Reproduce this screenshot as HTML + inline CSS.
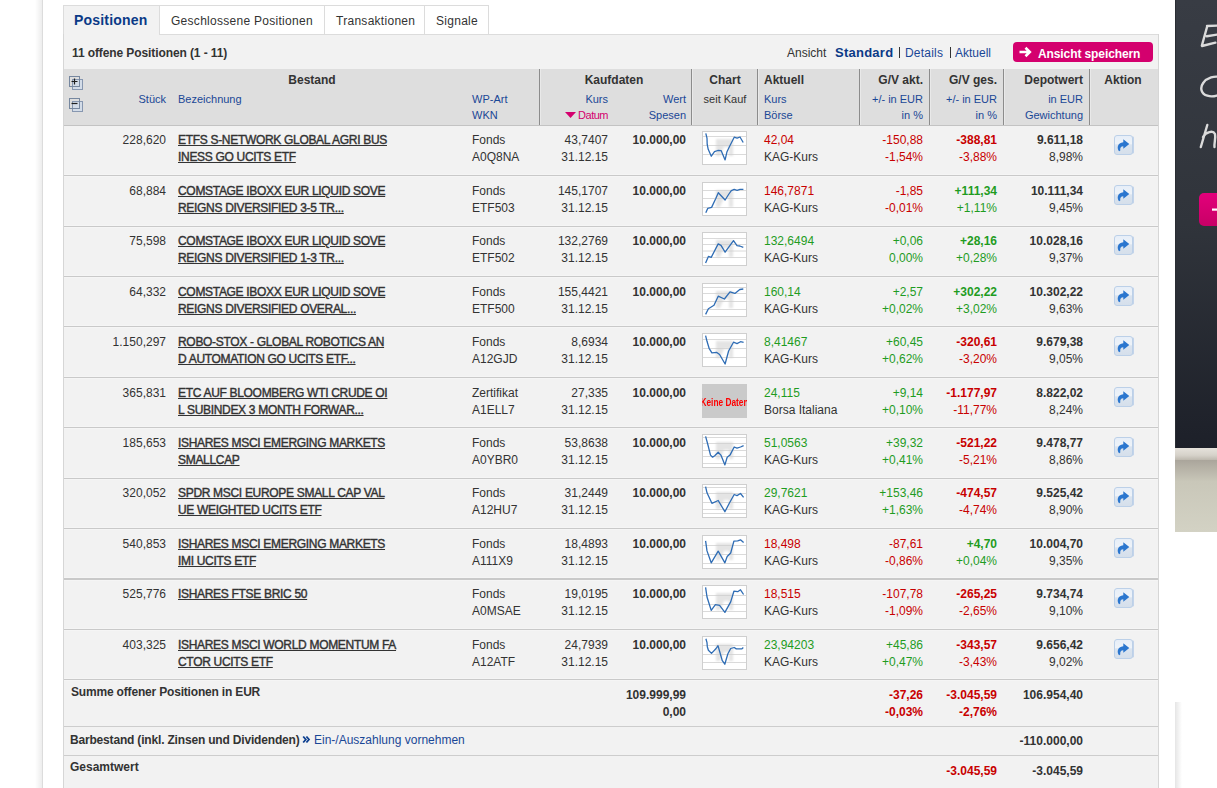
<!DOCTYPE html>
<html><head><meta charset="utf-8"><title>Depot</title>
<style>
html,body{margin:0;padding:0;background:#fff;width:1217px;height:788px;overflow:hidden;position:relative}
.t{position:absolute;white-space:nowrap;font-family:"Liberation Sans", sans-serif;line-height:14px}
.r{position:absolute;display:block}
</style></head><body>
<div class="r" style="left:35px;top:0px;width:7px;height:788px;background:linear-gradient(to right, rgba(255,255,255,0), rgba(0,0,0,0.07));"></div>
<div class="r" style="left:42px;top:0px;width:1px;height:788px;background:#dcdcdc;"></div>
<div class="r" style="left:1175px;top:702px;width:7px;height:86px;background:linear-gradient(to right, rgba(0,0,0,0.10), rgba(255,255,255,0));"></div>
<div class="r" style="left:1175px;top:0;width:42px;height:448px;background:linear-gradient(to bottom,#383c44 0%,#30343b 50%,#1d2029 100%)"></div>
<div class="r" style="left:1175px;top:0px;width:1px;height:448px;background:#2a2d33;"></div>
<div class="r" style="left:1175px;top:448px;width:42px;height:12px;background:linear-gradient(to bottom,#e6e2dc,#d6d2ca 60%,#bdb8ae)"></div>
<div class="r" style="left:1175px;top:460px;width:42px;height:72px;background:linear-gradient(to bottom,#aaa59b,#c9c7b9 30%,#d3d2c4 100%)"></div>
<svg class="r" style="left:1175px;top:0px" width="42" height="448" viewBox="0 0 42 448"><g stroke="#e4e4e4" stroke-width="2.4" fill="none" stroke-linecap="round" stroke-linejoin="round" opacity="0.95"><path d="M32.3 26 L26.9 45.5 M32 26 L44 25.5 M31.8 36.3 L44 34.3 M27 46 L40.4 42.7"/><ellipse cx="39" cy="86.5" rx="13" ry="9.5" transform="rotate(-18 39 86.5)"/><path d="M32.3 125 L25.8 147 M28 137 C31 132 38 130 40 134 C41 138 39 143 39.5 147"/></g><rect x="24" y="193" width="30" height="33" rx="5" fill="url(#pinkg)"/><rect x="37" y="208.5" width="8" height="2.2" fill="#fff"/><defs><linearGradient id="pinkg" x1="0" y1="0" x2="0" y2="1"><stop offset="0" stop-color="#e3007b"/><stop offset="1" stop-color="#c80066"/></linearGradient></defs></svg>
<div class="r" style="left:63px;top:5px;width:96px;height:30px;background:#f2f2f2;border-top:1px solid #dcdcdc;border-left:1px solid #dcdcdc;box-sizing:border-box"></div>
<div class="r" style="left:159px;top:5px;width:166px;height:30px;background:#fff;border:1px solid #dcdcdc;box-sizing:border-box"></div>
<div class="t" style="left:171px;top:14px;font-size:12px;font-weight:normal;color:#333333;letter-spacing:0.28px">Geschlossene Positionen</div>
<div class="r" style="left:324px;top:5px;width:101px;height:30px;background:#fff;border:1px solid #dcdcdc;box-sizing:border-box"></div>
<div class="t" style="left:336px;top:14px;font-size:12px;font-weight:normal;color:#333333;letter-spacing:0.28px">Transaktionen</div>
<div class="r" style="left:424px;top:5px;width:65px;height:30px;background:#fff;border:1px solid #dcdcdc;box-sizing:border-box"></div>
<div class="t" style="left:436px;top:14px;font-size:12px;font-weight:normal;color:#333333;letter-spacing:0.28px">Signale</div>
<div class="t" style="left:74px;top:13px;font-size:14px;font-weight:bold;color:#0b3a87;letter-spacing:0.2px">Positionen</div>
<div class="r" style="left:488px;top:34px;width:671px;height:1px;background:#dcdcdc;"></div>
<div class="r" style="left:64px;top:35px;width:1094px;height:34px;background:#f2f2f2;"></div>
<div class="t" style="left:72px;top:46px;font-size:12px;font-weight:bold;color:#333333;letter-spacing:-0.1px">11 offene Positionen (1 - 11)</div>
<div class="t" style="left:787px;top:46px;font-size:12px;font-weight:normal;color:#333333;">Ansicht</div>
<div class="t" style="left:835px;top:46px;font-size:13px;font-weight:bold;color:#0b3a87;letter-spacing:0.25px">Standard</div>
<div class="r" style="left:899px;top:47px;width:1px;height:11px;background:#333;"></div>
<div class="t" style="left:905px;top:46px;font-size:12px;font-weight:normal;color:#1a4796;letter-spacing:0.2px">Details</div>
<div class="r" style="left:950px;top:47px;width:1px;height:11px;background:#333;"></div>
<div class="t" style="left:955px;top:46px;font-size:12px;font-weight:normal;color:#1a4796;">Aktuell</div>
<div class="r" style="left:1013px;top:42px;width:140px;height:20px;border-radius:4px;background:#d4006e"></div>
<div class="t" style="left:1038px;top:47px;font-size:12px;font-weight:bold;color:#ffffff;letter-spacing:-0.1px">Ansicht speichern</div>
<svg class="r" style="left:1019px;top:46px" width="14" height="12" viewBox="0 0 14 12"><path d="M0.5 6 H10 M6.5 1.8 L10.8 6 L6.5 10.2" stroke="#fff" stroke-width="2.6" fill="none" stroke-linecap="butt" stroke-linejoin="miter"/></svg>
<div class="r" style="left:63px;top:34px;width:1px;height:754px;background:#d6d6d6;"></div>
<div class="r" style="left:1158px;top:34px;width:1px;height:754px;background:#d6d6d6;"></div>
<div class="r" style="left:64px;top:69px;width:1094px;height:56px;background:#dedede;"></div>
<div class="r" style="left:64px;top:125px;width:1094px;height:1px;background:#c3c3c3;"></div>
<div class="r" style="left:539px;top:69px;width:1px;height:56px;background:#8c8c8c;"></div>
<div class="r" style="left:540px;top:69px;width:1px;height:56px;background:#e9e9e9;"></div>
<div class="r" style="left:691px;top:69px;width:1px;height:56px;background:#8c8c8c;"></div>
<div class="r" style="left:692px;top:69px;width:1px;height:56px;background:#e9e9e9;"></div>
<div class="r" style="left:757px;top:69px;width:1px;height:56px;background:#8c8c8c;"></div>
<div class="r" style="left:758px;top:69px;width:1px;height:56px;background:#e9e9e9;"></div>
<div class="r" style="left:859px;top:69px;width:1px;height:56px;background:#8c8c8c;"></div>
<div class="r" style="left:860px;top:69px;width:1px;height:56px;background:#e9e9e9;"></div>
<div class="r" style="left:929px;top:69px;width:1px;height:56px;background:#8c8c8c;"></div>
<div class="r" style="left:930px;top:69px;width:1px;height:56px;background:#e9e9e9;"></div>
<div class="r" style="left:1003px;top:69px;width:1px;height:56px;background:#8c8c8c;"></div>
<div class="r" style="left:1004px;top:69px;width:1px;height:56px;background:#e9e9e9;"></div>
<div class="r" style="left:1089px;top:69px;width:1px;height:56px;background:#8c8c8c;"></div>
<div class="r" style="left:1090px;top:69px;width:1px;height:56px;background:#e9e9e9;"></div>
<svg class="r" style="left:69px;top:76px" width="14" height="14" viewBox="0 0 14 14"><defs><linearGradient id="bi{sign=="+"}" x1="0" y1="0" x2="0" y2="1"><stop offset="0" stop-color="#ffffff"/><stop offset="1" stop-color="#c9d3e0"/></linearGradient></defs><rect x="3.5" y="3.5" width="10" height="10" fill="#d3dce8" stroke="#8797b0"/><rect x="0.5" y="0.5" width="10" height="10" fill="url(#biTrue)" stroke="#76879f"/><path d="M2.5 5.5 H8.5 M5.5 2.5 V8.5" stroke="#1e1e1e" stroke-width="1.2"/></svg>
<svg class="r" style="left:69px;top:98px" width="14" height="14" viewBox="0 0 14 14"><defs><linearGradient id="bi{sign=="+"}" x1="0" y1="0" x2="0" y2="1"><stop offset="0" stop-color="#ffffff"/><stop offset="1" stop-color="#c9d3e0"/></linearGradient></defs><rect x="3.5" y="3.5" width="10" height="10" fill="#d3dce8" stroke="#8797b0"/><rect x="0.5" y="0.5" width="10" height="10" fill="url(#biFalse)" stroke="#76879f"/><path d="M2.5 5.5 H8.5" stroke="#1e1e1e" stroke-width="1.2"/></svg>
<div class="t" style="left:162px;width:300px;text-align:center;top:73px;font-size:12px;font-weight:bold;color:#333333;">Bestand</div>
<div class="t" style="right:1051px;top:92px;font-size:11px;font-weight:normal;color:#1a4796;">Stück</div>
<div class="t" style="left:178px;top:92px;font-size:11px;font-weight:normal;color:#1a4796;">Bezeichnung</div>
<div class="t" style="left:472px;top:92px;font-size:11px;font-weight:normal;color:#1a4796;">WP-Art</div>
<div class="t" style="left:472px;top:108px;font-size:11px;font-weight:normal;color:#1a4796;">WKN</div>
<div class="t" style="left:464px;width:300px;text-align:center;top:73px;font-size:12px;font-weight:bold;color:#333333;">Kaufdaten</div>
<div class="t" style="right:609px;top:92px;font-size:11px;font-weight:normal;color:#1a4796;">Kurs</div>
<div class="t" style="right:609px;top:108px;font-size:11px;font-weight:normal;color:#d4006e;letter-spacing:-0.5px">Datum</div>
<svg class="r" style="left:565px;top:112px" width="11" height="6" viewBox="0 0 11 6"><path d="M0 0 H11 L5.5 6 Z" fill="#d4006e"/></svg>
<div class="t" style="right:531px;top:92px;font-size:11px;font-weight:normal;color:#1a4796;">Wert</div>
<div class="t" style="right:531px;top:108px;font-size:11px;font-weight:normal;color:#1a4796;">Spesen</div>
<div class="t" style="left:575px;width:300px;text-align:center;top:73px;font-size:12px;font-weight:bold;color:#333333;">Chart</div>
<div class="t" style="left:575px;width:300px;text-align:center;top:92px;font-size:11px;font-weight:normal;color:#333333;">seit Kauf</div>
<div class="t" style="left:764px;top:73px;font-size:12px;font-weight:bold;color:#333333;">Aktuell</div>
<div class="t" style="left:764px;top:92px;font-size:11px;font-weight:normal;color:#1a4796;">Kurs</div>
<div class="t" style="left:764px;top:108px;font-size:11px;font-weight:normal;color:#1a4796;">Börse</div>
<div class="t" style="right:294px;top:73px;font-size:12px;font-weight:bold;color:#333333;">G/V akt.</div>
<div class="t" style="right:294px;top:92px;font-size:11px;font-weight:normal;color:#1a4796;">+/- in EUR</div>
<div class="t" style="right:294px;top:108px;font-size:11px;font-weight:normal;color:#1a4796;">in %</div>
<div class="t" style="right:220px;top:73px;font-size:12px;font-weight:bold;color:#333333;">G/V ges.</div>
<div class="t" style="right:220px;top:92px;font-size:11px;font-weight:normal;color:#1a4796;">+/- in EUR</div>
<div class="t" style="right:220px;top:108px;font-size:11px;font-weight:normal;color:#1a4796;">in %</div>
<div class="t" style="right:134px;top:73px;font-size:12px;font-weight:bold;color:#333333;">Depotwert</div>
<div class="t" style="right:134px;top:92px;font-size:11px;font-weight:normal;color:#1a4796;">in EUR</div>
<div class="t" style="right:134px;top:108px;font-size:11px;font-weight:normal;color:#1a4796;">Gewichtung</div>
<div class="t" style="left:973px;width:300px;text-align:center;top:73px;font-size:12px;font-weight:bold;color:#333333;">Aktion</div>
<svg width="0" height="0" style="position:absolute"><defs><filter id="blur" x="-20%" y="-20%" width="140%" height="140%"><feGaussianBlur stdDeviation="1.2"/></filter><linearGradient id="ag" x1="0" y1="0" x2="0" y2="1"><stop offset="0" stop-color="#e6eef8"/><stop offset="0.42" stop-color="#eef3f9"/><stop offset="0.5" stop-color="#dbe4ef"/><stop offset="1" stop-color="#d5dfeb"/></linearGradient></defs></svg>
<div class="r" style="left:64px;top:126px;width:1094px;height:49px;background:#f2f2f2;"></div>
<div class="t" style="right:1051px;top:133px;font-size:12px;font-weight:normal;color:#333333;">228,620</div>
<div class="t" style="left:178px;top:133px;font-size:12px;font-weight:normal;color:#333333;text-decoration:underline;letter-spacing:-0.31px;-webkit-text-stroke:0.4px #333">ETFS S-NETWORK GLOBAL AGRI BUS</div>
<div class="t" style="left:178px;top:150px;font-size:12px;font-weight:normal;color:#333333;text-decoration:underline;letter-spacing:-0.31px;-webkit-text-stroke:0.4px #333">INESS GO UCITS ETF</div>
<div class="t" style="left:472px;top:133px;font-size:12px;font-weight:normal;color:#333333;">Fonds</div>
<div class="t" style="left:472px;top:150px;font-size:12px;font-weight:normal;color:#333333;">A0Q8NA</div>
<div class="t" style="right:609px;top:133px;font-size:12px;font-weight:normal;color:#333333;">43,7407</div>
<div class="t" style="right:609px;top:150px;font-size:12px;font-weight:normal;color:#333333;">31.12.15</div>
<div class="t" style="right:531px;top:133px;font-size:12px;font-weight:bold;color:#333333;">10.000,00</div>
<svg class="r" style="left:702px;top:131px" width="45" height="34" viewBox="0 0 45 34"><rect x="0.5" y="0.5" width="44" height="33" fill="#ffffff" stroke="#cfcfcf"/><path d="M1 5.5 H44 M1 14.5 H44 M1 23.5 H44 " stroke="#dadada" stroke-width="1"/><g opacity="0.55" filter="url(#blur)"><path d="M14 8 H31 V25 H27 V16 H22 L18 25 H14 Z" fill="#cfcfcf"/></g><path d="M3.8,2.3 L5.0,7.2 L5.2,13.4 L6.2,18.3 L9.3,25.2 L12.5,20.7 L15.8,19.5 L19.2,19.7 L23.1,28.9 L25.0,20.7 L27.4,15.8 L32.2,6.2 L35.1,7.2 L38.0,6.0 L41.2,11.5" stroke="#2f6db5" stroke-width="1.3" fill="none" stroke-linejoin="round"/></svg>
<div class="t" style="left:764px;top:133px;font-size:12px;font-weight:normal;color:#c80000;">42,04</div>
<div class="t" style="left:764px;top:150px;font-size:12px;font-weight:normal;color:#333333;">KAG-Kurs</div>
<div class="t" style="right:294px;top:133px;font-size:12px;font-weight:normal;color:#c80000;">-150,88</div>
<div class="t" style="right:294px;top:150px;font-size:12px;font-weight:normal;color:#c80000;">-1,54%</div>
<div class="t" style="right:220px;top:133px;font-size:12px;font-weight:bold;color:#c80000;">-388,81</div>
<div class="t" style="right:220px;top:150px;font-size:12px;font-weight:normal;color:#c80000;">-3,88%</div>
<div class="t" style="right:134px;top:133px;font-size:12px;font-weight:bold;color:#333333;">9.611,18</div>
<div class="t" style="right:134px;top:150px;font-size:12px;font-weight:normal;color:#333333;">8,98%</div>
<svg class="r" style="left:1114px;top:135px" width="21" height="20" viewBox="0 0 21 20"><rect x="17" y="1.5" width="3" height="17" rx="1" fill="#c3d4ea"/><rect x="0.5" y="0.5" width="18" height="19" rx="2.5" fill="url(#ag)" stroke="#bcd0e8"/><path d="M9.3 4.3 L15.3 9 L9.3 13.8 L9.3 11.2 C6.8 11.2 5.8 12.8 6.3 15.6 L5.2 16.2 C2.6 13.6 3.2 7.6 9.3 7.2 Z" fill="#2a76cf"/></svg>
<div class="r" style="left:64px;top:176px;width:1094px;height:50px;background:#f2f2f2;"></div>
<div class="r" style="left:64px;top:174px;width:1094px;height:1px;background:#f5f5f5;"></div>
<div class="r" style="left:64px;top:175px;width:1094px;height:1px;background:#c9c9c9;"></div>
<div class="r" style="left:64px;top:176px;width:1094px;height:1px;background:#f5f5f5;"></div>
<div class="t" style="right:1051px;top:184px;font-size:12px;font-weight:normal;color:#333333;">68,884</div>
<div class="t" style="left:178px;top:184px;font-size:12px;font-weight:normal;color:#333333;text-decoration:underline;letter-spacing:-0.31px;-webkit-text-stroke:0.4px #333">COMSTAGE IBOXX EUR LIQUID SOVE</div>
<div class="t" style="left:178px;top:201px;font-size:12px;font-weight:normal;color:#333333;text-decoration:underline;letter-spacing:-0.31px;-webkit-text-stroke:0.4px #333">REIGNS DIVERSIFIED 3-5 TR...</div>
<div class="t" style="left:472px;top:184px;font-size:12px;font-weight:normal;color:#333333;">Fonds</div>
<div class="t" style="left:472px;top:201px;font-size:12px;font-weight:normal;color:#333333;">ETF503</div>
<div class="t" style="right:609px;top:184px;font-size:12px;font-weight:normal;color:#333333;">145,1707</div>
<div class="t" style="right:609px;top:201px;font-size:12px;font-weight:normal;color:#333333;">31.12.15</div>
<div class="t" style="right:531px;top:184px;font-size:12px;font-weight:bold;color:#333333;">10.000,00</div>
<svg class="r" style="left:702px;top:182px" width="45" height="34" viewBox="0 0 45 34"><rect x="0.5" y="0.5" width="44" height="33" fill="#ffffff" stroke="#cfcfcf"/><path d="M1 8.5 H44 M1 16.5 H44 M1 25.5 H44 " stroke="#dadada" stroke-width="1"/><g opacity="0.55" filter="url(#blur)"><path d="M14 8 H31 V25 H27 V16 H22 L18 25 H14 Z" fill="#cfcfcf"/></g><path d="M3.8,30.8 L5.7,26.4 L9.6,25.4 L13.9,16.3 L16.3,10.7 L23.1,18.0 L26.9,12.0 L29.3,8.6 L32.2,7.4 L35.1,8.3 L38.0,7.4 L41.4,7.4" stroke="#2f6db5" stroke-width="1.3" fill="none" stroke-linejoin="round"/></svg>
<div class="t" style="left:764px;top:184px;font-size:12px;font-weight:normal;color:#c80000;">146,7871</div>
<div class="t" style="left:764px;top:201px;font-size:12px;font-weight:normal;color:#333333;">KAG-Kurs</div>
<div class="t" style="right:294px;top:184px;font-size:12px;font-weight:normal;color:#c80000;">-1,85</div>
<div class="t" style="right:294px;top:201px;font-size:12px;font-weight:normal;color:#c80000;">-0,01%</div>
<div class="t" style="right:220px;top:184px;font-size:12px;font-weight:bold;color:#1f9c1f;">+111,34</div>
<div class="t" style="right:220px;top:201px;font-size:12px;font-weight:normal;color:#1f9c1f;">+1,11%</div>
<div class="t" style="right:134px;top:184px;font-size:12px;font-weight:bold;color:#333333;">10.111,34</div>
<div class="t" style="right:134px;top:201px;font-size:12px;font-weight:normal;color:#333333;">9,45%</div>
<svg class="r" style="left:1114px;top:185px" width="21" height="20" viewBox="0 0 21 20"><rect x="17" y="1.5" width="3" height="17" rx="1" fill="#c3d4ea"/><rect x="0.5" y="0.5" width="18" height="19" rx="2.5" fill="url(#ag)" stroke="#bcd0e8"/><path d="M9.3 4.3 L15.3 9 L9.3 13.8 L9.3 11.2 C6.8 11.2 5.8 12.8 6.3 15.6 L5.2 16.2 C2.6 13.6 3.2 7.6 9.3 7.2 Z" fill="#2a76cf"/></svg>
<div class="r" style="left:64px;top:227px;width:1094px;height:49px;background:#f2f2f2;"></div>
<div class="r" style="left:64px;top:225px;width:1094px;height:1px;background:#f5f5f5;"></div>
<div class="r" style="left:64px;top:226px;width:1094px;height:1px;background:#c9c9c9;"></div>
<div class="r" style="left:64px;top:227px;width:1094px;height:1px;background:#f5f5f5;"></div>
<div class="t" style="right:1051px;top:234px;font-size:12px;font-weight:normal;color:#333333;">75,598</div>
<div class="t" style="left:178px;top:234px;font-size:12px;font-weight:normal;color:#333333;text-decoration:underline;letter-spacing:-0.31px;-webkit-text-stroke:0.4px #333">COMSTAGE IBOXX EUR LIQUID SOVE</div>
<div class="t" style="left:178px;top:251px;font-size:12px;font-weight:normal;color:#333333;text-decoration:underline;letter-spacing:-0.31px;-webkit-text-stroke:0.4px #333">REIGNS DIVERSIFIED 1-3 TR...</div>
<div class="t" style="left:472px;top:234px;font-size:12px;font-weight:normal;color:#333333;">Fonds</div>
<div class="t" style="left:472px;top:251px;font-size:12px;font-weight:normal;color:#333333;">ETF502</div>
<div class="t" style="right:609px;top:234px;font-size:12px;font-weight:normal;color:#333333;">132,2769</div>
<div class="t" style="right:609px;top:251px;font-size:12px;font-weight:normal;color:#333333;">31.12.15</div>
<div class="t" style="right:531px;top:234px;font-size:12px;font-weight:bold;color:#333333;">10.000,00</div>
<svg class="r" style="left:702px;top:232px" width="45" height="34" viewBox="0 0 45 34"><rect x="0.5" y="0.5" width="44" height="33" fill="#ffffff" stroke="#cfcfcf"/><path d="M1 6.5 H44 M1 12.5 H44 M1 19.0 H44 M1 25.5 H44 " stroke="#dadada" stroke-width="1"/><g opacity="0.55" filter="url(#blur)"><path d="M14 8 H31 V25 H27 V16 H22 L18 25 H14 Z" fill="#cfcfcf"/></g><path d="M3.6,31.0 L6.4,24.4 L9.2,25.4 L16.2,11.9 L19.0,13.3 L23.1,20.2 L31.5,8.6 L35.0,13.7 L37.8,14.0 L41.3,15.3" stroke="#2f6db5" stroke-width="1.3" fill="none" stroke-linejoin="round"/></svg>
<div class="t" style="left:764px;top:234px;font-size:12px;font-weight:normal;color:#1f9c1f;">132,6494</div>
<div class="t" style="left:764px;top:251px;font-size:12px;font-weight:normal;color:#333333;">KAG-Kurs</div>
<div class="t" style="right:294px;top:234px;font-size:12px;font-weight:normal;color:#1f9c1f;">+0,06</div>
<div class="t" style="right:294px;top:251px;font-size:12px;font-weight:normal;color:#1f9c1f;">0,00%</div>
<div class="t" style="right:220px;top:234px;font-size:12px;font-weight:bold;color:#1f9c1f;">+28,16</div>
<div class="t" style="right:220px;top:251px;font-size:12px;font-weight:normal;color:#1f9c1f;">+0,28%</div>
<div class="t" style="right:134px;top:234px;font-size:12px;font-weight:bold;color:#333333;">10.028,16</div>
<div class="t" style="right:134px;top:251px;font-size:12px;font-weight:normal;color:#333333;">9,37%</div>
<svg class="r" style="left:1114px;top:235px" width="21" height="20" viewBox="0 0 21 20"><rect x="17" y="1.5" width="3" height="17" rx="1" fill="#c3d4ea"/><rect x="0.5" y="0.5" width="18" height="19" rx="2.5" fill="url(#ag)" stroke="#bcd0e8"/><path d="M9.3 4.3 L15.3 9 L9.3 13.8 L9.3 11.2 C6.8 11.2 5.8 12.8 6.3 15.6 L5.2 16.2 C2.6 13.6 3.2 7.6 9.3 7.2 Z" fill="#2a76cf"/></svg>
<div class="r" style="left:64px;top:277px;width:1094px;height:49px;background:#f2f2f2;"></div>
<div class="r" style="left:64px;top:275px;width:1094px;height:1px;background:#f5f5f5;"></div>
<div class="r" style="left:64px;top:276px;width:1094px;height:1px;background:#c9c9c9;"></div>
<div class="r" style="left:64px;top:277px;width:1094px;height:1px;background:#f5f5f5;"></div>
<div class="t" style="right:1051px;top:285px;font-size:12px;font-weight:normal;color:#333333;">64,332</div>
<div class="t" style="left:178px;top:285px;font-size:12px;font-weight:normal;color:#333333;text-decoration:underline;letter-spacing:-0.31px;-webkit-text-stroke:0.4px #333">COMSTAGE IBOXX EUR LIQUID SOVE</div>
<div class="t" style="left:178px;top:302px;font-size:12px;font-weight:normal;color:#333333;text-decoration:underline;letter-spacing:-0.31px;-webkit-text-stroke:0.4px #333">REIGNS DIVERSIFIED OVERAL...</div>
<div class="t" style="left:472px;top:285px;font-size:12px;font-weight:normal;color:#333333;">Fonds</div>
<div class="t" style="left:472px;top:302px;font-size:12px;font-weight:normal;color:#333333;">ETF500</div>
<div class="t" style="right:609px;top:285px;font-size:12px;font-weight:normal;color:#333333;">155,4421</div>
<div class="t" style="right:609px;top:302px;font-size:12px;font-weight:normal;color:#333333;">31.12.15</div>
<div class="t" style="right:531px;top:285px;font-size:12px;font-weight:bold;color:#333333;">10.000,00</div>
<svg class="r" style="left:702px;top:283px" width="45" height="34" viewBox="0 0 45 34"><rect x="0.5" y="0.5" width="44" height="33" fill="#ffffff" stroke="#cfcfcf"/><path d="M1 4.5 H44 M1 10.5 H44 M1 18.5 H44 M1 26.5 H44 " stroke="#dadada" stroke-width="1"/><g opacity="0.55" filter="url(#blur)"><path d="M14 8 H31 V25 H27 V16 H22 L18 25 H14 Z" fill="#cfcfcf"/></g><path d="M3.6,31.4 L6.4,25.8 L12.0,22.3 L16.2,13.2 L22.4,16.0 L28.0,8.8 L32.9,10.4 L37.8,6.5 L41.3,6.0" stroke="#2f6db5" stroke-width="1.3" fill="none" stroke-linejoin="round"/></svg>
<div class="t" style="left:764px;top:285px;font-size:12px;font-weight:normal;color:#1f9c1f;">160,14</div>
<div class="t" style="left:764px;top:302px;font-size:12px;font-weight:normal;color:#333333;">KAG-Kurs</div>
<div class="t" style="right:294px;top:285px;font-size:12px;font-weight:normal;color:#1f9c1f;">+2,57</div>
<div class="t" style="right:294px;top:302px;font-size:12px;font-weight:normal;color:#1f9c1f;">+0,02%</div>
<div class="t" style="right:220px;top:285px;font-size:12px;font-weight:bold;color:#1f9c1f;">+302,22</div>
<div class="t" style="right:220px;top:302px;font-size:12px;font-weight:normal;color:#1f9c1f;">+3,02%</div>
<div class="t" style="right:134px;top:285px;font-size:12px;font-weight:bold;color:#333333;">10.302,22</div>
<div class="t" style="right:134px;top:302px;font-size:12px;font-weight:normal;color:#333333;">9,63%</div>
<svg class="r" style="left:1114px;top:286px" width="21" height="20" viewBox="0 0 21 20"><rect x="17" y="1.5" width="3" height="17" rx="1" fill="#c3d4ea"/><rect x="0.5" y="0.5" width="18" height="19" rx="2.5" fill="url(#ag)" stroke="#bcd0e8"/><path d="M9.3 4.3 L15.3 9 L9.3 13.8 L9.3 11.2 C6.8 11.2 5.8 12.8 6.3 15.6 L5.2 16.2 C2.6 13.6 3.2 7.6 9.3 7.2 Z" fill="#2a76cf"/></svg>
<div class="r" style="left:64px;top:327px;width:1094px;height:50px;background:#f2f2f2;"></div>
<div class="r" style="left:64px;top:325px;width:1094px;height:1px;background:#f5f5f5;"></div>
<div class="r" style="left:64px;top:326px;width:1094px;height:1px;background:#c9c9c9;"></div>
<div class="r" style="left:64px;top:327px;width:1094px;height:1px;background:#f5f5f5;"></div>
<div class="t" style="right:1051px;top:335px;font-size:12px;font-weight:normal;color:#333333;">1.150,297</div>
<div class="t" style="left:178px;top:335px;font-size:12px;font-weight:normal;color:#333333;text-decoration:underline;letter-spacing:-0.31px;-webkit-text-stroke:0.4px #333">ROBO-STOX - GLOBAL ROBOTICS AN</div>
<div class="t" style="left:178px;top:352px;font-size:12px;font-weight:normal;color:#333333;text-decoration:underline;letter-spacing:-0.31px;-webkit-text-stroke:0.4px #333">D AUTOMATION GO UCITS ETF...</div>
<div class="t" style="left:472px;top:335px;font-size:12px;font-weight:normal;color:#333333;">Fonds</div>
<div class="t" style="left:472px;top:352px;font-size:12px;font-weight:normal;color:#333333;">A12GJD</div>
<div class="t" style="right:609px;top:335px;font-size:12px;font-weight:normal;color:#333333;">8,6934</div>
<div class="t" style="right:609px;top:352px;font-size:12px;font-weight:normal;color:#333333;">31.12.15</div>
<div class="t" style="right:531px;top:335px;font-size:12px;font-weight:bold;color:#333333;">10.000,00</div>
<svg class="r" style="left:702px;top:333px" width="45" height="34" viewBox="0 0 45 34"><rect x="0.5" y="0.5" width="44" height="33" fill="#ffffff" stroke="#cfcfcf"/><path d="M1 6.5 H44 M1 15.5 H44 M1 24.5 H44 " stroke="#dadada" stroke-width="1"/><g opacity="0.55" filter="url(#blur)"><path d="M14 8 H31 V25 H27 V16 H22 L18 25 H14 Z" fill="#cfcfcf"/></g><path d="M3.6,2.7 L5.0,8.3 L7.1,15.3 L9.9,19.9 L14.8,19.4 L17.6,21.5 L23.1,31.0 L26.6,18.0 L31.5,9.2 L35.0,10.6 L38.5,8.7 L41.6,9.4" stroke="#2f6db5" stroke-width="1.3" fill="none" stroke-linejoin="round"/></svg>
<div class="t" style="left:764px;top:335px;font-size:12px;font-weight:normal;color:#1f9c1f;">8,41467</div>
<div class="t" style="left:764px;top:352px;font-size:12px;font-weight:normal;color:#333333;">KAG-Kurs</div>
<div class="t" style="right:294px;top:335px;font-size:12px;font-weight:normal;color:#1f9c1f;">+60,45</div>
<div class="t" style="right:294px;top:352px;font-size:12px;font-weight:normal;color:#1f9c1f;">+0,62%</div>
<div class="t" style="right:220px;top:335px;font-size:12px;font-weight:bold;color:#c80000;">-320,61</div>
<div class="t" style="right:220px;top:352px;font-size:12px;font-weight:normal;color:#c80000;">-3,20%</div>
<div class="t" style="right:134px;top:335px;font-size:12px;font-weight:bold;color:#333333;">9.679,38</div>
<div class="t" style="right:134px;top:352px;font-size:12px;font-weight:normal;color:#333333;">9,05%</div>
<svg class="r" style="left:1114px;top:336px" width="21" height="20" viewBox="0 0 21 20"><rect x="17" y="1.5" width="3" height="17" rx="1" fill="#c3d4ea"/><rect x="0.5" y="0.5" width="18" height="19" rx="2.5" fill="url(#ag)" stroke="#bcd0e8"/><path d="M9.3 4.3 L15.3 9 L9.3 13.8 L9.3 11.2 C6.8 11.2 5.8 12.8 6.3 15.6 L5.2 16.2 C2.6 13.6 3.2 7.6 9.3 7.2 Z" fill="#2a76cf"/></svg>
<div class="r" style="left:64px;top:378px;width:1094px;height:49px;background:#f2f2f2;"></div>
<div class="r" style="left:64px;top:376px;width:1094px;height:1px;background:#f5f5f5;"></div>
<div class="r" style="left:64px;top:377px;width:1094px;height:1px;background:#c9c9c9;"></div>
<div class="r" style="left:64px;top:378px;width:1094px;height:1px;background:#f5f5f5;"></div>
<div class="t" style="right:1051px;top:386px;font-size:12px;font-weight:normal;color:#333333;">365,831</div>
<div class="t" style="left:178px;top:386px;font-size:12px;font-weight:normal;color:#333333;text-decoration:underline;letter-spacing:-0.31px;-webkit-text-stroke:0.4px #333">ETC AUF BLOOMBERG WTI CRUDE OI</div>
<div class="t" style="left:178px;top:403px;font-size:12px;font-weight:normal;color:#333333;text-decoration:underline;letter-spacing:-0.31px;-webkit-text-stroke:0.4px #333">L SUBINDEX 3 MONTH FORWAR...</div>
<div class="t" style="left:472px;top:386px;font-size:12px;font-weight:normal;color:#333333;">Zertifikat</div>
<div class="t" style="left:472px;top:403px;font-size:12px;font-weight:normal;color:#333333;">A1ELL7</div>
<div class="t" style="right:609px;top:386px;font-size:12px;font-weight:normal;color:#333333;">27,335</div>
<div class="t" style="right:609px;top:403px;font-size:12px;font-weight:normal;color:#333333;">31.12.15</div>
<div class="t" style="right:531px;top:386px;font-size:12px;font-weight:bold;color:#333333;">10.000,00</div>
<div class="r" style="left:702px;top:384px;width:45px;height:34px;background:#cacaca;overflow:hidden"><div style="position:absolute;left:-8px;top:13px;width:61px;text-align:center;font-family:'Liberation Sans',sans-serif;font-size:10px;font-weight:bold;line-height:12px;color:#ff0000;white-space:nowrap;transform:scaleX(0.83)">Keine Daten</div></div>
<div class="t" style="left:764px;top:386px;font-size:12px;font-weight:normal;color:#1f9c1f;">24,115</div>
<div class="t" style="left:764px;top:403px;font-size:12px;font-weight:normal;color:#333333;">Borsa Italiana</div>
<div class="t" style="right:294px;top:386px;font-size:12px;font-weight:normal;color:#1f9c1f;">+9,14</div>
<div class="t" style="right:294px;top:403px;font-size:12px;font-weight:normal;color:#1f9c1f;">+0,10%</div>
<div class="t" style="right:220px;top:386px;font-size:12px;font-weight:bold;color:#c80000;">-1.177,97</div>
<div class="t" style="right:220px;top:403px;font-size:12px;font-weight:normal;color:#c80000;">-11,77%</div>
<div class="t" style="right:134px;top:386px;font-size:12px;font-weight:bold;color:#333333;">8.822,02</div>
<div class="t" style="right:134px;top:403px;font-size:12px;font-weight:normal;color:#333333;">8,24%</div>
<svg class="r" style="left:1114px;top:387px" width="21" height="20" viewBox="0 0 21 20"><rect x="17" y="1.5" width="3" height="17" rx="1" fill="#c3d4ea"/><rect x="0.5" y="0.5" width="18" height="19" rx="2.5" fill="url(#ag)" stroke="#bcd0e8"/><path d="M9.3 4.3 L15.3 9 L9.3 13.8 L9.3 11.2 C6.8 11.2 5.8 12.8 6.3 15.6 L5.2 16.2 C2.6 13.6 3.2 7.6 9.3 7.2 Z" fill="#2a76cf"/></svg>
<div class="r" style="left:64px;top:428px;width:1094px;height:50px;background:#f2f2f2;"></div>
<div class="r" style="left:64px;top:426px;width:1094px;height:1px;background:#f5f5f5;"></div>
<div class="r" style="left:64px;top:427px;width:1094px;height:1px;background:#c9c9c9;"></div>
<div class="r" style="left:64px;top:428px;width:1094px;height:1px;background:#f5f5f5;"></div>
<div class="t" style="right:1051px;top:436px;font-size:12px;font-weight:normal;color:#333333;">185,653</div>
<div class="t" style="left:178px;top:436px;font-size:12px;font-weight:normal;color:#333333;text-decoration:underline;letter-spacing:-0.31px;-webkit-text-stroke:0.4px #333">ISHARES MSCI EMERGING MARKETS</div>
<div class="t" style="left:178px;top:453px;font-size:12px;font-weight:normal;color:#333333;text-decoration:underline;letter-spacing:-0.31px;-webkit-text-stroke:0.4px #333">SMALLCAP</div>
<div class="t" style="left:472px;top:436px;font-size:12px;font-weight:normal;color:#333333;">Fonds</div>
<div class="t" style="left:472px;top:453px;font-size:12px;font-weight:normal;color:#333333;">A0YBR0</div>
<div class="t" style="right:609px;top:436px;font-size:12px;font-weight:normal;color:#333333;">53,8638</div>
<div class="t" style="right:609px;top:453px;font-size:12px;font-weight:normal;color:#333333;">31.12.15</div>
<div class="t" style="right:531px;top:436px;font-size:12px;font-weight:bold;color:#333333;">10.000,00</div>
<svg class="r" style="left:702px;top:434px" width="45" height="34" viewBox="0 0 45 34"><rect x="0.5" y="0.5" width="44" height="33" fill="#ffffff" stroke="#cfcfcf"/><path d="M1 3.5 H44 M1 9.5 H44 M1 16.5 H44 M1 22.5 H44 M1 29.5 H44 " stroke="#dadada" stroke-width="1"/><g opacity="0.55" filter="url(#blur)"><path d="M14 8 H31 V25 H27 V16 H22 L18 25 H14 Z" fill="#cfcfcf"/></g><path d="M3.6,2.3 L5.7,10.0 L8.5,21.1 L10.6,23.2 L12.7,21.8 L16.2,18.3 L18.9,21.1 L22.9,30.9 L25.2,23.2 L28.0,21.1 L32.2,13.0 L35.0,14.2 L38.5,13.0 L41.6,11.6" stroke="#2f6db5" stroke-width="1.3" fill="none" stroke-linejoin="round"/></svg>
<div class="t" style="left:764px;top:436px;font-size:12px;font-weight:normal;color:#1f9c1f;">51,0563</div>
<div class="t" style="left:764px;top:453px;font-size:12px;font-weight:normal;color:#333333;">KAG-Kurs</div>
<div class="t" style="right:294px;top:436px;font-size:12px;font-weight:normal;color:#1f9c1f;">+39,32</div>
<div class="t" style="right:294px;top:453px;font-size:12px;font-weight:normal;color:#1f9c1f;">+0,41%</div>
<div class="t" style="right:220px;top:436px;font-size:12px;font-weight:bold;color:#c80000;">-521,22</div>
<div class="t" style="right:220px;top:453px;font-size:12px;font-weight:normal;color:#c80000;">-5,21%</div>
<div class="t" style="right:134px;top:436px;font-size:12px;font-weight:bold;color:#333333;">9.478,77</div>
<div class="t" style="right:134px;top:453px;font-size:12px;font-weight:normal;color:#333333;">8,86%</div>
<svg class="r" style="left:1114px;top:437px" width="21" height="20" viewBox="0 0 21 20"><rect x="17" y="1.5" width="3" height="17" rx="1" fill="#c3d4ea"/><rect x="0.5" y="0.5" width="18" height="19" rx="2.5" fill="url(#ag)" stroke="#bcd0e8"/><path d="M9.3 4.3 L15.3 9 L9.3 13.8 L9.3 11.2 C6.8 11.2 5.8 12.8 6.3 15.6 L5.2 16.2 C2.6 13.6 3.2 7.6 9.3 7.2 Z" fill="#2a76cf"/></svg>
<div class="r" style="left:64px;top:479px;width:1094px;height:49px;background:#f2f2f2;"></div>
<div class="r" style="left:64px;top:477px;width:1094px;height:1px;background:#f5f5f5;"></div>
<div class="r" style="left:64px;top:478px;width:1094px;height:1px;background:#c9c9c9;"></div>
<div class="r" style="left:64px;top:479px;width:1094px;height:1px;background:#f5f5f5;"></div>
<div class="t" style="right:1051px;top:486px;font-size:12px;font-weight:normal;color:#333333;">320,052</div>
<div class="t" style="left:178px;top:486px;font-size:12px;font-weight:normal;color:#333333;text-decoration:underline;letter-spacing:-0.31px;-webkit-text-stroke:0.4px #333">SPDR MSCI EUROPE SMALL CAP VAL</div>
<div class="t" style="left:178px;top:503px;font-size:12px;font-weight:normal;color:#333333;text-decoration:underline;letter-spacing:-0.31px;-webkit-text-stroke:0.4px #333">UE WEIGHTED UCITS ETF</div>
<div class="t" style="left:472px;top:486px;font-size:12px;font-weight:normal;color:#333333;">Fonds</div>
<div class="t" style="left:472px;top:503px;font-size:12px;font-weight:normal;color:#333333;">A12HU7</div>
<div class="t" style="right:609px;top:486px;font-size:12px;font-weight:normal;color:#333333;">31,2449</div>
<div class="t" style="right:609px;top:503px;font-size:12px;font-weight:normal;color:#333333;">31.12.15</div>
<div class="t" style="right:531px;top:486px;font-size:12px;font-weight:bold;color:#333333;">10.000,00</div>
<svg class="r" style="left:702px;top:484px" width="45" height="34" viewBox="0 0 45 34"><rect x="0.5" y="0.5" width="44" height="33" fill="#ffffff" stroke="#cfcfcf"/><path d="M1 3.5 H44 M1 9.5 H44 M1 18.5 H44 M1 25.5 H44 M1 29.5 H44 " stroke="#dadada" stroke-width="1"/><g opacity="0.55" filter="url(#blur)"><path d="M14 8 H31 V25 H27 V16 H22 L18 25 H14 Z" fill="#cfcfcf"/></g><path d="M3.6,2.6 L5.0,8.8 L9.9,19.3 L16.2,16.5 L22.9,27.7 L27.3,19.3 L32.2,10.5 L35.0,11.6 L38.5,9.5 L41.6,13.3" stroke="#2f6db5" stroke-width="1.3" fill="none" stroke-linejoin="round"/></svg>
<div class="t" style="left:764px;top:486px;font-size:12px;font-weight:normal;color:#1f9c1f;">29,7621</div>
<div class="t" style="left:764px;top:503px;font-size:12px;font-weight:normal;color:#333333;">KAG-Kurs</div>
<div class="t" style="right:294px;top:486px;font-size:12px;font-weight:normal;color:#1f9c1f;">+153,46</div>
<div class="t" style="right:294px;top:503px;font-size:12px;font-weight:normal;color:#1f9c1f;">+1,63%</div>
<div class="t" style="right:220px;top:486px;font-size:12px;font-weight:bold;color:#c80000;">-474,57</div>
<div class="t" style="right:220px;top:503px;font-size:12px;font-weight:normal;color:#c80000;">-4,74%</div>
<div class="t" style="right:134px;top:486px;font-size:12px;font-weight:bold;color:#333333;">9.525,42</div>
<div class="t" style="right:134px;top:503px;font-size:12px;font-weight:normal;color:#333333;">8,90%</div>
<svg class="r" style="left:1114px;top:487px" width="21" height="20" viewBox="0 0 21 20"><rect x="17" y="1.5" width="3" height="17" rx="1" fill="#c3d4ea"/><rect x="0.5" y="0.5" width="18" height="19" rx="2.5" fill="url(#ag)" stroke="#bcd0e8"/><path d="M9.3 4.3 L15.3 9 L9.3 13.8 L9.3 11.2 C6.8 11.2 5.8 12.8 6.3 15.6 L5.2 16.2 C2.6 13.6 3.2 7.6 9.3 7.2 Z" fill="#2a76cf"/></svg>
<div class="r" style="left:64px;top:529px;width:1094px;height:49px;background:#f2f2f2;"></div>
<div class="r" style="left:64px;top:527px;width:1094px;height:1px;background:#f5f5f5;"></div>
<div class="r" style="left:64px;top:528px;width:1094px;height:1px;background:#c9c9c9;"></div>
<div class="r" style="left:64px;top:529px;width:1094px;height:1px;background:#f5f5f5;"></div>
<div class="t" style="right:1051px;top:537px;font-size:12px;font-weight:normal;color:#333333;">540,853</div>
<div class="t" style="left:178px;top:537px;font-size:12px;font-weight:normal;color:#333333;text-decoration:underline;letter-spacing:-0.31px;-webkit-text-stroke:0.4px #333">ISHARES MSCI EMERGING MARKETS</div>
<div class="t" style="left:178px;top:554px;font-size:12px;font-weight:normal;color:#333333;text-decoration:underline;letter-spacing:-0.31px;-webkit-text-stroke:0.4px #333">IMI UCITS ETF</div>
<div class="t" style="left:472px;top:537px;font-size:12px;font-weight:normal;color:#333333;">Fonds</div>
<div class="t" style="left:472px;top:554px;font-size:12px;font-weight:normal;color:#333333;">A111X9</div>
<div class="t" style="right:609px;top:537px;font-size:12px;font-weight:normal;color:#333333;">18,4893</div>
<div class="t" style="right:609px;top:554px;font-size:12px;font-weight:normal;color:#333333;">31.12.15</div>
<div class="t" style="right:531px;top:537px;font-size:12px;font-weight:bold;color:#333333;">10.000,00</div>
<svg class="r" style="left:702px;top:535px" width="45" height="34" viewBox="0 0 45 34"><rect x="0.5" y="0.5" width="44" height="33" fill="#ffffff" stroke="#cfcfcf"/><path d="M1 10.5 H44 M1 19.5 H44 M1 28.5 H44 " stroke="#dadada" stroke-width="1"/><g opacity="0.55" filter="url(#blur)"><path d="M14 8 H31 V25 H27 V16 H22 L18 25 H14 Z" fill="#cfcfcf"/></g><path d="M3.6,5.9 L5.0,15.9 L9.2,27.8 L16.2,16.2 L22.9,27.8 L25.2,21.5 L28.7,18.0 L31.9,6.2 L35.7,5.9 L38.5,4.8 L41.6,7.6" stroke="#2f6db5" stroke-width="1.3" fill="none" stroke-linejoin="round"/></svg>
<div class="t" style="left:764px;top:537px;font-size:12px;font-weight:normal;color:#c80000;">18,498</div>
<div class="t" style="left:764px;top:554px;font-size:12px;font-weight:normal;color:#333333;">KAG-Kurs</div>
<div class="t" style="right:294px;top:537px;font-size:12px;font-weight:normal;color:#c80000;">-87,61</div>
<div class="t" style="right:294px;top:554px;font-size:12px;font-weight:normal;color:#c80000;">-0,86%</div>
<div class="t" style="right:220px;top:537px;font-size:12px;font-weight:bold;color:#1f9c1f;">+4,70</div>
<div class="t" style="right:220px;top:554px;font-size:12px;font-weight:normal;color:#1f9c1f;">+0,04%</div>
<div class="t" style="right:134px;top:537px;font-size:12px;font-weight:bold;color:#333333;">10.004,70</div>
<div class="t" style="right:134px;top:554px;font-size:12px;font-weight:normal;color:#333333;">9,35%</div>
<svg class="r" style="left:1114px;top:538px" width="21" height="20" viewBox="0 0 21 20"><rect x="17" y="1.5" width="3" height="17" rx="1" fill="#c3d4ea"/><rect x="0.5" y="0.5" width="18" height="19" rx="2.5" fill="url(#ag)" stroke="#bcd0e8"/><path d="M9.3 4.3 L15.3 9 L9.3 13.8 L9.3 11.2 C6.8 11.2 5.8 12.8 6.3 15.6 L5.2 16.2 C2.6 13.6 3.2 7.6 9.3 7.2 Z" fill="#2a76cf"/></svg>
<div class="r" style="left:64px;top:580px;width:1094px;height:49px;background:#f2f2f2;"></div>
<div class="r" style="left:64px;top:577px;width:1094px;height:1px;background:#f5f5f5;"></div>
<div class="r" style="left:64px;top:578px;width:1094px;height:2px;background:#c9c9c9;"></div>
<div class="r" style="left:64px;top:580px;width:1094px;height:1px;background:#f5f5f5;"></div>
<div class="t" style="right:1051px;top:587px;font-size:12px;font-weight:normal;color:#333333;">525,776</div>
<div class="t" style="left:178px;top:587px;font-size:12px;font-weight:normal;color:#333333;text-decoration:underline;letter-spacing:-0.31px;-webkit-text-stroke:0.4px #333">ISHARES FTSE BRIC 50</div>
<div class="t" style="left:472px;top:587px;font-size:12px;font-weight:normal;color:#333333;">Fonds</div>
<div class="t" style="left:472px;top:604px;font-size:12px;font-weight:normal;color:#333333;">A0MSAE</div>
<div class="t" style="right:609px;top:587px;font-size:12px;font-weight:normal;color:#333333;">19,0195</div>
<div class="t" style="right:609px;top:604px;font-size:12px;font-weight:normal;color:#333333;">31.12.15</div>
<div class="t" style="right:531px;top:587px;font-size:12px;font-weight:bold;color:#333333;">10.000,00</div>
<svg class="r" style="left:702px;top:585px" width="45" height="34" viewBox="0 0 45 34"><rect x="0.5" y="0.5" width="44" height="33" fill="#ffffff" stroke="#cfcfcf"/><path d="M1 10.5 H44 M1 19.5 H44 M1 26.5 H44 " stroke="#dadada" stroke-width="1"/><g opacity="0.55" filter="url(#blur)"><path d="M14 8 H31 V25 H27 V16 H22 L18 25 H14 Z" fill="#cfcfcf"/></g><path d="M3.6,2.3 L5.0,12.0 L9.2,25.3 L13.4,19.7 L17.6,20.4 L22.9,27.4 L28.7,16.9 L31.9,6.2 L35.7,6.7 L38.5,4.8 L41.6,9.5" stroke="#2f6db5" stroke-width="1.3" fill="none" stroke-linejoin="round"/></svg>
<div class="t" style="left:764px;top:587px;font-size:12px;font-weight:normal;color:#c80000;">18,515</div>
<div class="t" style="left:764px;top:604px;font-size:12px;font-weight:normal;color:#333333;">KAG-Kurs</div>
<div class="t" style="right:294px;top:587px;font-size:12px;font-weight:normal;color:#c80000;">-107,78</div>
<div class="t" style="right:294px;top:604px;font-size:12px;font-weight:normal;color:#c80000;">-1,09%</div>
<div class="t" style="right:220px;top:587px;font-size:12px;font-weight:bold;color:#c80000;">-265,25</div>
<div class="t" style="right:220px;top:604px;font-size:12px;font-weight:normal;color:#c80000;">-2,65%</div>
<div class="t" style="right:134px;top:587px;font-size:12px;font-weight:bold;color:#333333;">9.734,74</div>
<div class="t" style="right:134px;top:604px;font-size:12px;font-weight:normal;color:#333333;">9,10%</div>
<svg class="r" style="left:1114px;top:588px" width="21" height="20" viewBox="0 0 21 20"><rect x="17" y="1.5" width="3" height="17" rx="1" fill="#c3d4ea"/><rect x="0.5" y="0.5" width="18" height="19" rx="2.5" fill="url(#ag)" stroke="#bcd0e8"/><path d="M9.3 4.3 L15.3 9 L9.3 13.8 L9.3 11.2 C6.8 11.2 5.8 12.8 6.3 15.6 L5.2 16.2 C2.6 13.6 3.2 7.6 9.3 7.2 Z" fill="#2a76cf"/></svg>
<div class="r" style="left:64px;top:630px;width:1094px;height:49px;background:#f2f2f2;"></div>
<div class="r" style="left:64px;top:628px;width:1094px;height:1px;background:#f5f5f5;"></div>
<div class="r" style="left:64px;top:629px;width:1094px;height:1px;background:#c9c9c9;"></div>
<div class="r" style="left:64px;top:630px;width:1094px;height:1px;background:#f5f5f5;"></div>
<div class="t" style="right:1051px;top:638px;font-size:12px;font-weight:normal;color:#333333;">403,325</div>
<div class="t" style="left:178px;top:638px;font-size:12px;font-weight:normal;color:#333333;text-decoration:underline;letter-spacing:-0.31px;-webkit-text-stroke:0.4px #333">ISHARES MSCI WORLD MOMENTUM FA</div>
<div class="t" style="left:178px;top:655px;font-size:12px;font-weight:normal;color:#333333;text-decoration:underline;letter-spacing:-0.31px;-webkit-text-stroke:0.4px #333">CTOR UCITS ETF</div>
<div class="t" style="left:472px;top:638px;font-size:12px;font-weight:normal;color:#333333;">Fonds</div>
<div class="t" style="left:472px;top:655px;font-size:12px;font-weight:normal;color:#333333;">A12ATF</div>
<div class="t" style="right:609px;top:638px;font-size:12px;font-weight:normal;color:#333333;">24,7939</div>
<div class="t" style="right:609px;top:655px;font-size:12px;font-weight:normal;color:#333333;">31.12.15</div>
<div class="t" style="right:531px;top:638px;font-size:12px;font-weight:bold;color:#333333;">10.000,00</div>
<svg class="r" style="left:702px;top:636px" width="45" height="34" viewBox="0 0 45 34"><rect x="0.5" y="0.5" width="44" height="33" fill="#ffffff" stroke="#cfcfcf"/><path d="M1 9.5 H44 M1 18.5 H44 M1 26.5 H44 " stroke="#dadada" stroke-width="1"/><g opacity="0.55" filter="url(#blur)"><path d="M14 8 H31 V25 H27 V16 H22 L18 25 H14 Z" fill="#cfcfcf"/></g><path d="M3.9,2.7 L5.0,6.6 L5.3,10.8 L6.4,14.3 L9.5,17.4 L14.1,12.5 L16.0,9.7 L18.3,17.7 L20.3,24.7 L22.8,28.2 L25.9,17.7 L28.7,12.5 L32.2,11.5 L34.3,12.9 L39.9,12.9 L41.3,11.5" stroke="#2f6db5" stroke-width="1.3" fill="none" stroke-linejoin="round"/></svg>
<div class="t" style="left:764px;top:638px;font-size:12px;font-weight:normal;color:#1f9c1f;">23,94203</div>
<div class="t" style="left:764px;top:655px;font-size:12px;font-weight:normal;color:#333333;">KAG-Kurs</div>
<div class="t" style="right:294px;top:638px;font-size:12px;font-weight:normal;color:#1f9c1f;">+45,86</div>
<div class="t" style="right:294px;top:655px;font-size:12px;font-weight:normal;color:#1f9c1f;">+0,47%</div>
<div class="t" style="right:220px;top:638px;font-size:12px;font-weight:bold;color:#c80000;">-343,57</div>
<div class="t" style="right:220px;top:655px;font-size:12px;font-weight:normal;color:#c80000;">-3,43%</div>
<div class="t" style="right:134px;top:638px;font-size:12px;font-weight:bold;color:#333333;">9.656,42</div>
<div class="t" style="right:134px;top:655px;font-size:12px;font-weight:normal;color:#333333;">9,02%</div>
<svg class="r" style="left:1114px;top:639px" width="21" height="20" viewBox="0 0 21 20"><rect x="17" y="1.5" width="3" height="17" rx="1" fill="#c3d4ea"/><rect x="0.5" y="0.5" width="18" height="19" rx="2.5" fill="url(#ag)" stroke="#bcd0e8"/><path d="M9.3 4.3 L15.3 9 L9.3 13.8 L9.3 11.2 C6.8 11.2 5.8 12.8 6.3 15.6 L5.2 16.2 C2.6 13.6 3.2 7.6 9.3 7.2 Z" fill="#2a76cf"/></svg>
<div class="r" style="left:64px;top:678px;width:1094px;height:1px;background:#f5f5f5;"></div>
<div class="r" style="left:64px;top:679px;width:1094px;height:1px;background:#c9c9c9;"></div>
<div class="r" style="left:64px;top:680px;width:1094px;height:46px;background:#f2f2f2;"></div>
<div class="r" style="left:64px;top:680px;width:1094px;height:1px;background:#f5f5f5;"></div>
<div class="t" style="left:71px;top:685px;font-size:12px;font-weight:bold;color:#333333;letter-spacing:-0.18px">Summe offener Positionen in EUR</div>
<div class="t" style="right:531px;top:688px;font-size:12px;font-weight:bold;color:#333333;">109.999,99</div>
<div class="t" style="right:531px;top:705px;font-size:12px;font-weight:bold;color:#333333;">0,00</div>
<div class="t" style="right:294px;top:688px;font-size:12px;font-weight:bold;color:#c80000;">-37,26</div>
<div class="t" style="right:294px;top:705px;font-size:12px;font-weight:bold;color:#c80000;">-0,03%</div>
<div class="t" style="right:220px;top:688px;font-size:12px;font-weight:bold;color:#c80000;">-3.045,59</div>
<div class="t" style="right:220px;top:705px;font-size:12px;font-weight:bold;color:#c80000;">-2,76%</div>
<div class="t" style="right:134px;top:688px;font-size:12px;font-weight:bold;color:#333333;">106.954,40</div>
<div class="r" style="left:64px;top:726px;width:1094px;height:1px;background:#cdcdcd;"></div>
<div class="r" style="left:64px;top:727px;width:1094px;height:28px;background:#f2f2f2;"></div>
<div class="t" style="left:70px;top:733px;font-size:12px;font-weight:bold;color:#333333;letter-spacing:-0.18px">Barbestand (inkl. Zinsen und Dividenden)</div>
<svg class="r" style="left:302px;top:735px" width="9" height="9" viewBox="0 0 9 9"><path d="M1.2 1.5 L3.8 4.5 L1.2 7.5 M4.4 1.5 L7 4.5 L4.4 7.5" stroke="#0d3f8f" stroke-width="1.8" fill="none"/></svg>
<div class="t" style="left:314px;top:733px;font-size:12px;font-weight:normal;color:#1a4796;">Ein-/Auszahlung vornehmen</div>
<div class="t" style="right:134px;top:734px;font-size:12px;font-weight:bold;color:#333333;">-110.000,00</div>
<div class="r" style="left:64px;top:755px;width:1094px;height:1px;background:#cdcdcd;"></div>
<div class="r" style="left:64px;top:756px;width:1094px;height:32px;background:#f2f2f2;"></div>
<div class="t" style="left:70px;top:760px;font-size:12px;font-weight:bold;color:#333333;">Gesamtwert</div>
<div class="t" style="right:220px;top:764px;font-size:12px;font-weight:bold;color:#c80000;">-3.045,59</div>
<div class="t" style="right:134px;top:764px;font-size:12px;font-weight:bold;color:#333333;">-3.045,59</div>
</body></html>
